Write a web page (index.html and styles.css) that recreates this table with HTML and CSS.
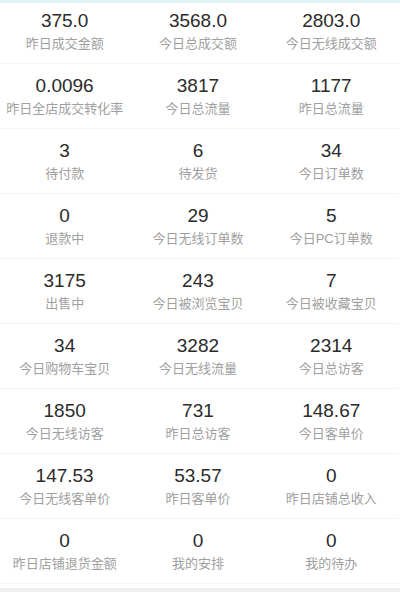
FILE: index.html
```html
<!DOCTYPE html>
<html>
<head>
<meta charset="utf-8">
<link rel="stylesheet" href="styles.css">
</head>
<body>
<div class="topbar"></div>
<div class="grid">
  <div class="cell"><div class="num">375.0</div><div class="label">昨日成交金额</div></div>
  <div class="cell"><div class="num">3568.0</div><div class="label">今日总成交额</div></div>
  <div class="cell"><div class="num">2803.0</div><div class="label">今日无线成交额</div></div>
  <div class="cell"><div class="num">0.0096</div><div class="label">昨日全店成交转化率</div></div>
  <div class="cell"><div class="num">3817</div><div class="label">今日总流量</div></div>
  <div class="cell"><div class="num">1177</div><div class="label">昨日总流量</div></div>
  <div class="cell"><div class="num">3</div><div class="label">待付款</div></div>
  <div class="cell"><div class="num">6</div><div class="label">待发货</div></div>
  <div class="cell"><div class="num">34</div><div class="label">今日订单数</div></div>
  <div class="cell"><div class="num">0</div><div class="label">退款中</div></div>
  <div class="cell"><div class="num">29</div><div class="label">今日无线订单数</div></div>
  <div class="cell"><div class="num">5</div><div class="label">今日PC订单数</div></div>
  <div class="cell"><div class="num">3175</div><div class="label">出售中</div></div>
  <div class="cell"><div class="num">243</div><div class="label">今日被浏览宝贝</div></div>
  <div class="cell"><div class="num">7</div><div class="label">今日被收藏宝贝</div></div>
  <div class="cell"><div class="num">34</div><div class="label">今日购物车宝贝</div></div>
  <div class="cell"><div class="num">3282</div><div class="label">今日无线流量</div></div>
  <div class="cell"><div class="num">2314</div><div class="label">今日总访客</div></div>
  <div class="cell"><div class="num">1850</div><div class="label">今日无线访客</div></div>
  <div class="cell"><div class="num">731</div><div class="label">昨日总访客</div></div>
  <div class="cell"><div class="num">148.67</div><div class="label">今日客单价</div></div>
  <div class="cell"><div class="num">147.53</div><div class="label">今日无线客单价</div></div>
  <div class="cell"><div class="num">53.57</div><div class="label">昨日客单价</div></div>
  <div class="cell"><div class="num">0</div><div class="label">昨日店铺总收入</div></div>
  <div class="cell"><div class="num">0</div><div class="label">昨日店铺退货金额</div></div>
  <div class="cell"><div class="num">0</div><div class="label">我的安排</div></div>
  <div class="cell"><div class="num">0</div><div class="label">我的待办</div></div>
</div>
<div class="footer"></div>
</body>
</html>
```

FILE: styles.css
```css
html, body {
  margin: 0;
  padding: 0;
  background: #ffffff;
  width: 400px;
  height: 592px;
  overflow: hidden;
  font-family: "Liberation Sans", "Noto Sans CJK SC", sans-serif;
}
.topbar {
  height: 3px;
  background: #e2f5fa;
}
.grid {
  display: grid;
  grid-template-columns: repeat(3, 133.3px);
  grid-template-rows: 61px repeat(8, 65px);
  margin-left: -2px;
  width: 400px;
}
.cell {
  display: flex;
  flex-direction: column;
  justify-content: flex-end;
  align-items: center;
  padding-bottom: 8px;
  box-sizing: border-box;
  border-bottom: 1px solid #f3f4f6;
}
.num {
  font-size: 19px;
  line-height: 22px;
  color: #2b2b2b;
}
.label {
  font-size: 13px;
  line-height: 23px;
  color: #a0a0a0;
}
.footer {
  margin-top: 4px;
  height: 4px;
  background: #eeeff1;
}
```
